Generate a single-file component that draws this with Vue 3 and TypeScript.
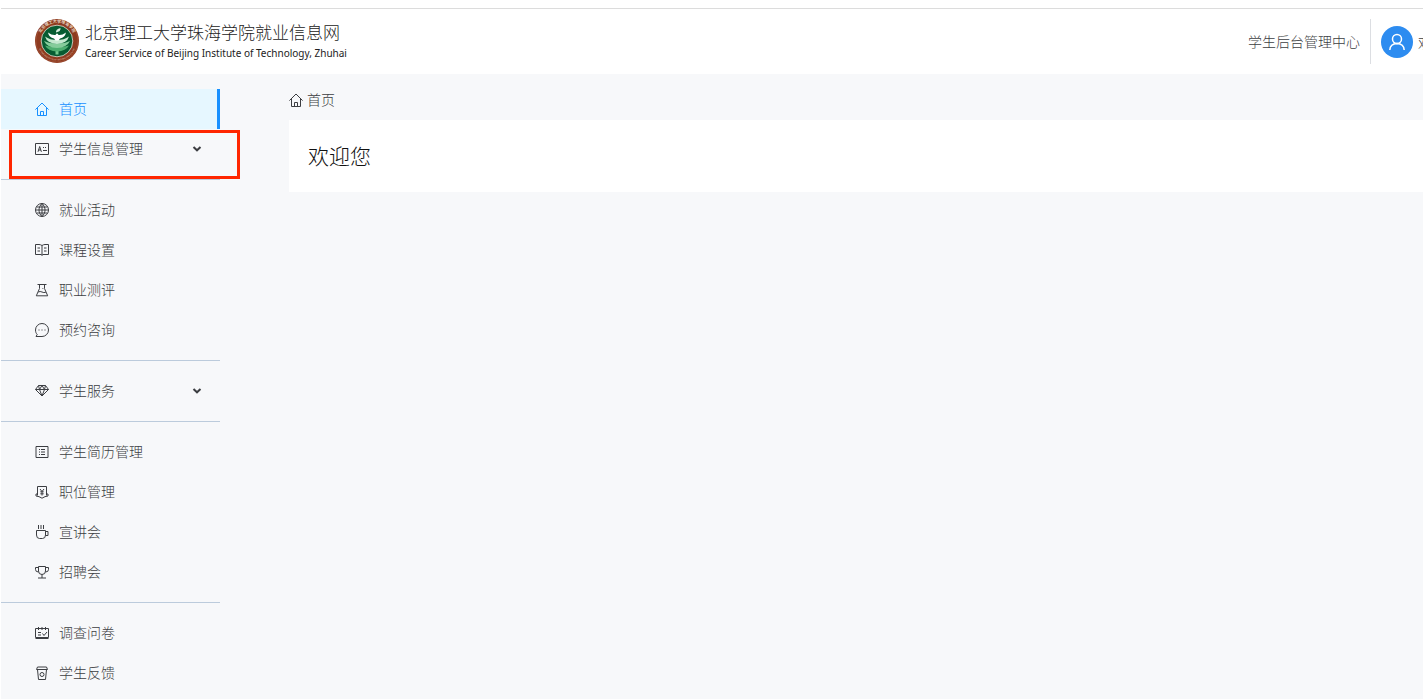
<script setup lang="ts">
import { ref } from 'vue'

interface MenuItem {
  label: string
  icon: string
  expandable?: boolean
  marked?: boolean
}

const groups: MenuItem[][] = [
  [
    { label: '首页', icon: 'home' },
    { label: '学生信息管理', icon: 'idcard', expandable: true, marked: true },
  ],
  [
    { label: '就业活动', icon: 'globe' },
    { label: '课程设置', icon: 'book' },
    { label: '职业测评', icon: 'flask' },
    { label: '预约咨询', icon: 'chat' },
  ],
  [{ label: '学生服务', icon: 'diamond', expandable: true }],
  [
    { label: '学生简历管理', icon: 'list' },
    { label: '职位管理', icon: 'salary' },
    { label: '宣讲会', icon: 'cup' },
    { label: '招聘会', icon: 'trophy' },
  ],
  [
    { label: '调查问卷', icon: 'survey' },
    { label: '学生反馈', icon: 'feedback' },
  ],
]

const icons: Record<string, string> = {
  home: 'M.4 7.600 7 1l6.600 6.600M2.500 6v7.500h9V6M5.500 13.500v-4h3v4',
  idcard: 'M.5 1.500h13v11H.5zM3 9.800 4.700 4.500l1.700 5.300M3.600 8h2.200M8 5.500h1M10 5.500h1M8 8.500h4',
  globe: 'M7 .5a6.500 6.500 0 1 0 0 13 6.500 6.500 0 0 0 0-13zM7 .5v13M.5 7h13M1.500 4h11M1.500 10h11M7 .5C3 4 3 10 7 13.500M7 .5c4 3.500 4 9.500 0 13',
  book: 'M7 2.500Q5.500 1.500 4 1.500H.5v10H6q1 0 1 1 0-1 1-1h5.500v-10H10q-1.500 0-3 1v9M2.500 5h2.500M2.500 8h2.500M9 5h2.500M9 8h2.500',
  flask: 'M2.500 1.500h9M4.500 1.500V5.500L1.300 12.800h11.400L9.500 5.500V1.500M3.200 9q2-1 3.800 0t3.800.3M7.500 5.500h.8',
  chat: 'M1 13.500h6A6.500 6.500 0 1 0 .5 7c0 2 .6 3.300 1.700 4.500zM3.500 7h1M6.500 7h1M9.500 7h1',
  diamond: 'M3.500 1.500h7l3 4L7 12 .5 5.500zM.5 5.500h13M3.500 1.500l1 4L7 12l2.500-6.500 1-4M4.500 5.500 7 1.500l2.500 4',
  list: 'M1 1.500h12v11H1zM4 4.500h1M6 4.500h4M4 7h1M6 7h4M4 9.500h1M6 9.500h4',
  salary: 'M2.500 10.500v-9h9v9M2.500 9H1v2q3 .2 6 2.200 3-2 6-2.200V9h-1.500M5 4l2 2.500L9 4M7 6.500v4M5.300 6.800h3.400M5.300 8.800h3.400',
  cup: 'M1.500 5.500h9V10q0 3.500-3 3.500h-3q-3 0-3-3.500zM10.500 6.500h2.500v4h-2.500M3.500 0v4M6 0v4M8.500 0v4',
  trophy: 'M3.500 1.500h7V6q0 3.500-3.500 3.500T3.500 6zM3.500 2.500h-3v2q0 2.500 3 2.500M10.500 2.500h3v2q0 2.500-3 2.500M7 9.500v3.500M3 13h8',
  survey: 'M.5 2.500h13v9H.5zM3.500 1v3M7 1v3M10.500 1v3M.5 12.500h13M3 6.500h3M3 9h3M7.500 7.500l1.500 2 3-3.500',
  feedback: 'M2.500 1h9l1 2.500h-11zM2.500 3.500l1 10h7l1-10M7 6.500a2 2 0 1 0 0 4 2 2 0 0 0 0-4z',
}

const active = ref('首页')
</script>

<template>
  <div class="page">
    <header class="header">
      <a class="brand" href="#">
        <svg class="seal" viewBox="0 0 44 44" aria-hidden="true">
          <defs>
            <path id="arc-top" d="M4.500 26A18 18 0 1 1 39.500 26" />
            <path id="arc-bottom" d="M2.500 22A19.500 19.500 0 0 0 41.500 22" />
          </defs>
          <circle cx="22" cy="22" r="22" fill="#8e3b20" />
          <circle cx="22" cy="22" r="21" fill="none" stroke="#a6583d" stroke-width=".6" />
          <circle cx="22" cy="22" r="15.800" fill="#075c32" stroke="#e9ddd3" stroke-width=".8" />
          <text class="seal-cn"><textPath href="#arc-top" startOffset="50%" text-anchor="middle">北京理工大学珠海学院</textPath></text>
          <text class="seal-en"><textPath href="#arc-bottom" startOffset="50%" text-anchor="middle">BEIJING INSTITUTE OF TECHNOLOGY ZHUHAI</textPath></text>
          <path d="M20.500 27h3v8.500h-3z" fill="#75c98e" />
          <path d="M10 26.500q5 1.500 12 1.500t12-1.500q-3 5.500-12 6-9-.5-12-6z" fill="#4fae70" />
          <path d="M9 22q5 2.500 13 2.500T35 22q-3 6.500-13 7Q12 28.500 9 22z" fill="#86cc9b" />
          <path d="M10 17.500q5 3.500 12 3.500t12-3.500q-2 7-12 7.500-10-.5-12-7.500z" fill="#c5e8cf" />
          <path d="M13 13.500q4 3 7.500 2.500.5-1.500 1.500-1.500t1.500 1.500q3.500.5 7.500-2.500-1 5-6 6l-1.500 2h-3l-1.500-2q-5-1-6-6z" fill="#fff" />
          <path d="M21 13.500q-.5-3.500 4.500-4.500.5 3.500-4.500 4.500z" fill="#d8efdf" />
        </svg>
        <span class="brand-text">
          <span class="brand-cn">北京理工大学珠海学院就业信息网</span>
          <span class="brand-en">Career Service of Beijing Institute of Technology, Zhuhai</span>
        </span>
      </a>
      <div class="account">
        <a class="center-link" href="#">学生后台管理中心</a>
        <button class="user" type="button">
          <svg class="avatar" viewBox="0 0 32 32" aria-hidden="true">
            <circle cx="16" cy="16" r="16" fill="#2d8cf0" />
            <g fill="none" stroke="#fff" stroke-width="1.500">
              <circle cx="16" cy="13" r="4.500" />
              <path d="M8.800 24q.4-6.300 7.200-6.500 6.800.2 7.200 6.500" />
            </g>
          </svg>
          <span>欢迎您</span>
        </button>
      </div>
    </header>

    <div class="body">
      <nav class="sidebar" aria-label="主菜单">
        <ul v-for="(group, i) in groups" :key="i" class="group">
          <li v-for="item in group" :key="item.label" class="entry">
            <button
              type="button"
              class="item"
              :class="{ active: active === item.label }"
              @click="active = item.label"
            >
              <svg class="icon" viewBox="0 0 14 14" aria-hidden="true"><path :d="icons[item.icon]" /></svg>
              <span class="label">{{ item.label }}</span>
              <svg v-if="item.expandable" class="chevron" viewBox="0 0 10 10" aria-hidden="true">
                <path d="M1.500 3 5 6.300l3.500-3.300" />
              </svg>
            </button>
            <span v-if="item.marked" class="marker"></span>
          </li>
        </ul>
      </nav>

      <main class="main">
        <a class="crumb" href="#">
          <svg class="icon" viewBox="0 0 14 14" aria-hidden="true"><path :d="icons.home" /></svg>
          <span class="label">首页</span>
        </a>
        <section class="card">
          <h1>欢迎您</h1>
        </section>
      </main>
    </div>
  </div>
</template>

<style>
body {
  margin: 0;
  background: #fff;
}
</style>

<style scoped>
.page {
  box-sizing: border-box;
  min-height: 100vh;
  padding: 8px 0 0 1px;
  display: flex;
  flex-direction: column;
  overflow: hidden;
  font-family: "Noto Sans CJK SC", sans-serif;
  font-weight: 300;
  font-size: 14px;
  color: #3c3e42;
}
a {
  color: inherit;
  text-decoration: none;
}
button {
  border: 0;
  padding: 0;
  background: none;
  font: inherit;
  color: inherit;
  cursor: pointer;
}
.header {
  display: flex;
  justify-content: space-between;
  align-items: center;
  height: 65px;
  border-top: 1px solid #dcdcdc;
  padding-left: 34px;
  background: #fff;
}
.brand {
  display: flex;
  align-items: center;
  gap: 6px;
  padding-bottom: 1px;
}
.seal {
  width: 44px;
  height: 44px;
}
.seal-cn {
  font-size: 4px;
  font-weight: 500;
  fill: #f3e6dc;
}
.seal-en {
  font-family: "Liberation Sans", sans-serif;
  font-size: 2px;
  fill: #e3c9ba;
}
.brand-text {
  display: flex;
  flex-direction: column;
  color: #222;
}
.brand-cn {
  font-size: 17px;
  line-height: 24px;
}
.brand-en {
  font-family: "Noto Sans", sans-serif;
  font-weight: 400;
  font-size: 10px;
  line-height: 18px;
}
.account {
  display: flex;
  align-items: center;
  width: 175px;
  white-space: nowrap;
}
.center-link {
  flex: none;
  padding-right: 10px;
  line-height: 45px;
  border-right: 1px solid #dcdee2;
}
.user {
  flex: none;
  display: flex;
  align-items: center;
  gap: 5px;
  padding-left: 10px;
}
.avatar {
  width: 32px;
  height: 32px;
}
.body {
  flex: 1;
  display: flex;
  background: #f7f8fa;
}
.sidebar {
  flex: none;
  width: 219px;
  padding-top: 15px;
}
.group {
  margin: 0;
  padding: 0;
  list-style: none;
}
.group + .group {
  margin-top: 10px;
  padding-top: 10px;
  border-top: 1px solid #bccbdc;
}
.entry {
  position: relative;
}
.item {
  display: flex;
  align-items: center;
  gap: 10px;
  box-sizing: border-box;
  width: 100%;
  height: 40px;
  padding: 0 18px 0 34px;
}
.item.active {
  color: #1890ff;
  background: #e6f7ff;
  border-right: 3px solid #1890ff;
}
.label {
  padding-bottom: 2px;
}
.icon {
  width: 14px;
  height: 14px;
  flex: none;
}
.icon path {
  fill: none;
  stroke: currentColor;
}
.chevron {
  width: 10px;
  height: 10px;
  margin-left: auto;
}
.chevron path {
  fill: none;
  stroke: currentColor;
  stroke-width: 2;
}
.marker {
  position: absolute;
  inset: 1px -20px -10px 8px;
  border: 3px solid #ff2600;
  pointer-events: none;
}
.main {
  flex: 1;
  padding-left: 69px;
}
.crumb {
  display: flex;
  align-items: center;
  gap: 4px;
  box-sizing: border-box;
  height: 46px;
  padding-top: 6px;
}
.card {
  padding: 19px;
  background: #fff;
}
h1 {
  margin: 0;
  padding-bottom: 2px;
  font-size: 21px;
  line-height: 32px;
  font-weight: 300;
  color: #111;
}
</style>
